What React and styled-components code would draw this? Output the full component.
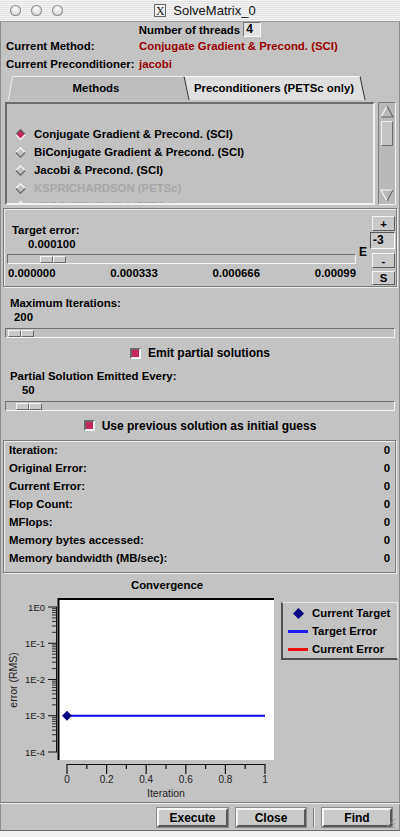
import React from 'react';
import styled, { createGlobalStyle } from 'styled-components';

const GlobalStyle = createGlobalStyle`
  html, body {
    margin: 0;
    padding: 0;
    background: #f0f0f0;
  }
  body {
    font-family: "Liberation Sans", Arial, sans-serif;
    font-size: 11.4px;
    color: #000;
  }
`;

const BG = '#c3c3c3';
const RED_TEXT = '#9a0000';
const CHECK_RED = '#c4265a';
const FS = '11.4px';

const Window = styled.div`
  position: relative;
  width: 400px;
  box-sizing: border-box;
  background: ${BG};
  border-bottom: 1px solid #6e6e6e;
  box-shadow: inset 1px 0 0 #8c8c8c, inset -1px 0 0 #8c8c8c, 0 2px 4px rgba(0, 0, 0, 0.35);
  display: flex;
  flex-direction: column;
  font-weight: bold;
`;

/* ---------- title bar ---------- */

const TitleBar = styled.div`
  height: 22px;
  box-sizing: border-box;
  display: grid;
  grid-template-columns: 1fr auto 1fr;
  align-items: center;
  padding-left: 10px;
  background: repeating-linear-gradient(#f4f4f4 0 1px, #e3e3e3 1px 2px);
  border-bottom: 1px solid #9a9a9a;
`;

const Lights = styled.div`
  display: flex;
  gap: 10px;
`;

const Light = styled.span`
  width: 11px;
  height: 11px;
  border-radius: 50%;
  background: radial-gradient(circle at 50% 35%, #fbfbfb, #c6c6c6);
  box-shadow: inset 0 0 0 1px #8e8e8e;
`;

const Title = styled.div`
  display: flex;
  align-items: center;
  gap: 7px;
  font-weight: normal;
  font-size: 13px;
  color: #111;
`;

const XLogo = styled.span`
  width: 10px;
  height: 11px;
  border: 1px solid #6a6a6a;
  background: #f6f6f6;
  display: flex;
  align-items: center;
  justify-content: center;
  font-family: "Liberation Serif", serif;
  font-size: 12px;
  line-height: 1;
`;

/* ---------- header rows ---------- */

const ThreadsRow = styled.div`
  height: 15px;
  display: flex;
  align-items: center;
  justify-content: center;
  gap: 3px;
  font-size: ${FS};
`;

const SmallField = styled.div`
  width: 18px;
  height: 15px;
  box-sizing: border-box;
  border: 1px solid;
  border-color: #777 #fafafa #fafafa #777;
  background: #e2e2e2;
  padding-left: 2px;
  font-size: 12px;
  line-height: 13px;
`;

const InfoGrid = styled.div`
  display: grid;
  grid-template-columns: 133px 1fr;
  grid-auto-rows: 18px;
  align-items: center;
  padding-left: 6px;
  white-space: nowrap;
`;

const Value = styled.span`
  color: ${RED_TEXT};
`;

/* ---------- tabs + list ---------- */

const Tabs = styled.div`
  margin-top: 3px;
  height: 24px;
  display: flex;
  padding-left: 10px;
`;

const Tab = styled.div`
  position: relative;
  z-index: ${p => (p.$active ? 1 : 2)};
  width: ${p => p.$w}px;
  margin-left: ${p => p.$shift || 0}px;
  height: 24px;
  display: flex;
  align-items: center;
  justify-content: center;
  font-size: ${FS};

  &::before {
    content: '';
    position: absolute;
    inset: 0;
    z-index: -1;
    background: ${p => (p.$active ? '#bdbdbd' : '#dfdfdf')};
    border-top: 1px solid ${p => (p.$active ? '#ececec' : '#f8f8f8')};
    border-left: 1px solid ${p => (p.$active ? '#efefef' : '#2e2e2e')};
    border-right: 1px solid ${p => (p.$active ? 'transparent' : '#2e2e2e')};
    transform: skewX(${p => p.$skew}deg);
  }
`;

const TabText = styled.span`
  margin-left: ${p => p.$nudge || 0}px;
`;

const ListArea = styled.div`
  margin: 2px 0 0 5px;
  height: 103px;
  display: flex;
  gap: 3px;
`;

const ListBox = styled.div`
  width: 370px;
  box-sizing: border-box;
  border: 2px solid;
  border-color: #6c6c6c #f2f2f2 #f2f2f2 #6c6c6c;
  background: #c1c1c1;
  padding-top: 21px;
  overflow: hidden;
`;

const ListItem = styled.div`
  height: 18px;
  display: flex;
  align-items: center;
  gap: 8px;
  padding-left: 8px;
  font-size: ${FS};
  color: ${p => (p.$dim ? '#a7a7a7' : '#000')};
`;

const ScrollBar = styled.div`
  width: 18px;
  box-sizing: border-box;
  border: 1px solid;
  border-color: #7c7c7c #f4f4f4 #f4f4f4 #7c7c7c;
  background: #b9b9b9;
  display: flex;
  flex-direction: column;
  align-items: center;
  padding: 1px 0;
`;

const ScrollThumb = styled.div`
  width: 12px;
  height: 25px;
  margin-top: 2px;
  box-sizing: border-box;
  border: 1px solid;
  border-color: #f4f4f4 #6c6c6c #6c6c6c #f4f4f4;
  background: #c4c4c4;
`;

const Spacer = styled.div`
  flex: 1;
`;

/* ---------- panels ---------- */

const Panel = styled.div`
  margin: ${p => p.$margin};
  height: ${p => p.$h}px;
  box-sizing: border-box;
  border: 1px solid #7c7c7c;
  box-shadow: inset 1px 1px 0 #ececec, 1px 1px 0 #ececec;
`;

const TargetPanel = styled(Panel)`
  display: grid;
  grid-template-columns: 1fr 14px 25px;
  padding-right: 1px;
`;

const TargetMain = styled.div`
  padding: 14px 0 0 3px;
  display: flex;
  flex-direction: column;
`;

const Line = styled.div`
  height: 14px;
  line-height: 14px;
  padding-left: ${p => p.$indent || 0}px;
  font-size: ${FS};
  white-space: nowrap;
`;

const ScaleLabels = styled.div`
  margin-top: 2px;
  height: 14px;
  line-height: 14px;
  display: flex;
  justify-content: space-between;
  padding-left: 1px;
`;

const ELabel = styled.div`
  padding-top: 36px;
  text-align: center;
  font-size: 12px;
  line-height: 14px;
`;

const SideButtons = styled.div`
  display: flex;
  flex-direction: column;
  align-items: flex-end;
  padding-top: 7px;
`;

const SideButton = styled.div`
  width: 23px;
  height: ${p => p.$h || 15}px;
  margin-top: ${p => p.$top || 0}px;
  box-sizing: border-box;
  border: 1px solid;
  border-color: #f4f4f4 #5e5e5e #5e5e5e #f4f4f4;
  background: #c9c9c9;
  display: flex;
  align-items: center;
  justify-content: center;
  font-size: ${FS};
`;

const ExpField = styled.div`
  width: 25px;
  height: 17px;
  margin-top: 1px;
  box-sizing: border-box;
  border: 1px solid;
  border-color: #555 #fafafa #fafafa #555;
  background: #c9c9c9;
  padding-left: 2px;
  font-size: 12px;
  line-height: 15px;
`;

/* ---------- sliders ---------- */

const Track = styled.div`
  height: 10px;
  margin: ${p => p.$margin};
  box-sizing: border-box;
  border: 1px solid;
  border-color: #6f6f6f #f4f4f4 #f4f4f4 #6f6f6f;
  background: #c1c1c1;
  display: flex;
  align-items: center;
`;

const Thumb = styled.div`
  margin-left: ${p => p.$at}px;
  display: flex;
`;

const ThumbHalf = styled.span`
  width: 13px;
  height: 7px;
  box-sizing: border-box;
  border: 1px solid;
  border-color: #f6f6f6 #6a6a6a #6a6a6a #f6f6f6;
  background: #c8c8c8;
`;

const Slider = ({ at, margin }) => (
  <Track $margin={margin}>
    <Thumb $at={at}>
      <ThumbHalf />
      <ThumbHalf />
    </Thumb>
  </Track>
);

const Section = styled.div`
  padding: ${p => p.$pad || 0};
  display: flex;
  flex-direction: column;
`;

const CheckRow = styled.div`
  height: ${p => p.$h}px;
  display: flex;
  align-items: center;
  justify-content: center;
  gap: 7px;
  font-size: 12px;
`;

const CheckBox = styled.span`
  width: 11px;
  height: 11px;
  box-sizing: border-box;
  border: 2px solid;
  border-color: #6a6a6a #f4f4f4 #f4f4f4 #6a6a6a;
  background: ${CHECK_RED};
`;

/* ---------- stats ---------- */

const StatRow = styled.div`
  height: 18px;
  display: flex;
  align-items: center;
  justify-content: space-between;
  padding: 0 5px;
  font-size: ${FS};
`;

/* ---------- chart ---------- */

const ChartSection = styled.div`
  display: flex;
`;

const ChartColumn = styled.div`
  display: flex;
  flex-direction: column;
`;

const ChartTitle = styled.div`
  margin-top: 5px;
  height: 14px;
  line-height: 14px;
  padding-left: 58px;
  text-align: center;
  font-size: ${FS};
`;

const Plot = styled.svg`
  display: block;
  font-family: "Liberation Sans", Arial, sans-serif;
  font-weight: normal;
`;

const Legend = styled.div`
  margin: 29px 0 0 5px;
  width: 117px;
  height: 58px;
  box-sizing: border-box;
  border-style: solid;
  border-width: 1px 1px 2px 2px;
  border-color: #e6e6e6 #e6e6e6 #505050 #505050;
  padding: 1px 0 0 5px;
`;

const LegendItem = styled.div`
  height: 18px;
  display: flex;
  align-items: center;
  gap: 4px;
  font-size: ${FS};
  white-space: nowrap;
`;

const LegendIcon = styled.span`
  width: 20px;
  height: 11px;
  display: flex;
  align-items: center;
  justify-content: center;
`;

const LegendLine = styled.span`
  width: 20px;
  height: 3px;
  background: ${p => p.$color};
`;

/* ---------- bottom ---------- */

const Separator = styled.div`
  margin-top: 2px;
  height: 0;
  border-top: 1px solid #7c7c7c;
  border-bottom: 1px solid #ececec;
`;

const ButtonBar = styled.div`
  display: flex;
  justify-content: flex-end;
  align-items: center;
  gap: 8px;
  padding: 4px 8px 3px 0;
`;

const Button = styled.div`
  width: ${p => p.$w}px;
  height: 19px;
  box-sizing: border-box;
  border: 2px solid;
  border-color: #f6f6f6 #575757 #575757 #f6f6f6;
  outline: 1px solid #8a8a8a;
  background: #cacaca;
  display: flex;
  align-items: center;
  justify-content: center;
  font-size: 12px;
`;

const VSep = styled.div`
  width: 0;
  height: 19px;
  border-left: 1px solid #7c7c7c;
  border-right: 1px solid #ececec;
  margin: 0 -1px;
`;

const Grip = styled.svg`
  position: absolute;
  right: 4px;
  bottom: 1px;
`;

/* ---------- drawings ---------- */

const Diamond = ({ on }) => (
  <svg width="11" height="11" viewBox="0 0 11 11">
    <polygon points="5.5,0.8 10.2,5.5 5.5,10.2 0.8,5.5" fill={on ? CHECK_RED : '#c1c1c1'} />
    <polyline points="0.8,5.5 5.5,0.8 10.2,5.5" fill="none" stroke={on ? '#5e5e5e' : '#f6f6f6'} strokeWidth="1.3" />
    <polyline points="0.8,5.5 5.5,10.2 10.2,5.5" fill="none" stroke={on ? '#f6f6f6' : '#6a6a6a'} strokeWidth="1.3" />
  </svg>
);

const ArrowUp = () => (
  <svg width="14" height="15" viewBox="0 0 14 15">
    <polyline points="1,13 7,2" fill="none" stroke="#f6f6f6" strokeWidth="1.2" />
    <polyline points="7,2 13,13 1,13" fill="none" stroke="#6a6a6a" strokeWidth="1.2" />
  </svg>
);

const ArrowDown = () => (
  <svg width="14" height="14" viewBox="0 0 14 14">
    <polyline points="13,1 1,1 7,12" fill="none" stroke="#f6f6f6" strokeWidth="1.2" />
    <polyline points="7,12 13,1" fill="none" stroke="#6a6a6a" strokeWidth="1.2" />
  </svg>
);

const Y_TOP = 15;
const DEC = 36.25;
const X0 = 67;
const XS = 198;
const Y_LABELS = ['1E0', '1E-1', '1E-2', '1E-3', '1E-4'];
const X_LABELS = ['0', '0.2', '0.4', '0.6', '0.8', '1'];

const ConvergencePlot = () => {
  const minor = [];
  for (let d = 0; d < 4; d++) {
    const yb = Y_TOP + DEC * (d + 1);
    for (let v = 2; v < 10; v++) minor.push(yb - Math.log10(v) * DEC);
  }
  const targetY = Y_TOP + DEC * 3;

  return (
    <Plot width="276" height="208" viewBox="0 0 276 208">
      <rect x="58" y="7" width="216" height="161" fill="#fff" />
      <line x1="58.5" y1="6" x2="58.5" y2="168" stroke="#000" strokeWidth="2" />
      <line x1="58" y1="7" x2="274" y2="7" stroke="#000" strokeWidth="2" />

      <line x1="56.5" y1={Y_TOP} x2="56.5" y2={Y_TOP + DEC * 4} stroke="#111" strokeWidth="1" />
      {Y_LABELS.map((t, i) => (
        <g key={t}>
          <line x1="48" y1={Y_TOP + DEC * i} x2="57" y2={Y_TOP + DEC * i} stroke="#111" strokeWidth="1" />
          <text x="45" y={Y_TOP + DEC * i + 3.5} fontSize="9.5" textAnchor="end" fill="#222">{t}</text>
        </g>
      ))}
      {minor.map((y, i) => (
        <line key={i} x1="52" y1={y} x2="57" y2={y} stroke="#222" strokeWidth="0.9" />
      ))}
      <text x="13" y="88" fontSize="10.5" textAnchor="middle" dominantBaseline="central"
        transform="rotate(-90 13 88)" fill="#222">error (RMS)</text>

      <line x1={X0} y1="172.5" x2={X0 + XS} y2="172.5" stroke="#111" strokeWidth="1" />
      {Array.from({ length: 11 }, (_, i) => (
        <line key={i} x1={X0 + (XS * i) / 10} y1="172" x2={X0 + (XS * i) / 10}
          y2={i % 2 === 0 ? 182 : 177} stroke="#111" strokeWidth="1.2" />
      ))}
      {X_LABELS.map((t, i) => (
        <text key={t} x={X0 + (XS * i) / 5} y="191" fontSize="10" textAnchor="middle" fill="#222">{t}</text>
      ))}
      <text x="166" y="205" fontSize="10.5" textAnchor="middle" fill="#222">Iteration</text>

      <line x1={X0} y1={targetY} x2={X0 + XS} y2={targetY} stroke="#0a0ae6" strokeWidth="2" />
      <polygon points={`${X0},${targetY - 5} ${X0 + 5},${targetY} ${X0},${targetY + 5} ${X0 - 5},${targetY}`} fill="#00007e" />
    </Plot>
  );
};

const methods = [
  { label: 'Conjugate Gradient & Precond. (SCI)', on: true },
  { label: 'BiConjugate Gradient & Precond. (SCI)' },
  { label: 'Jacobi & Precond. (SCI)' },
  { label: 'KSPRICHARDSON (PETSc)', dim: true },
  { label: 'KSPCHEBYCHEV (PETSc)', dim: true },
];

const stats = [
  'Iteration:',
  'Original Error:',
  'Current Error:',
  'Flop Count:',
  'MFlops:',
  'Memory bytes accessed:',
  'Memory bandwidth (MB/sec):',
];

const App = () => {
  return (
    <>
      <GlobalStyle />
      <Window>
        <TitleBar>
          <Lights>
            <Light />
            <Light />
            <Light />
          </Lights>
          <Title>
            <XLogo>X</XLogo>
            SolveMatrix_0
          </Title>
          <span />
        </TitleBar>

        <ThreadsRow>
          Number of threads
          <SmallField>4</SmallField>
        </ThreadsRow>

        <InfoGrid>
          <span>Current Method:</span>
          <Value>Conjugate Gradient &amp; Precond. (SCI)</Value>
          <span>Current Preconditioner:</span>
          <Value>jacobi</Value>
        </InfoGrid>

        <Tabs>
          <Tab $active $w={180} $skew={-10}>
            <TabText $nudge={-8}>Methods</TabText>
          </Tab>
          <Tab $w={177} $shift={-4.5} $skew={12}>
            Preconditioners (PETSc only)
          </Tab>
        </Tabs>

        <ListArea>
          <ListBox>
            {methods.map(m => (
              <ListItem key={m.label} $dim={m.dim}>
                <Diamond on={m.on} />
                {m.label}
              </ListItem>
            ))}
          </ListBox>
          <ScrollBar>
            <ArrowUp />
            <ScrollThumb />
            <Spacer />
            <ArrowDown />
          </ScrollBar>
        </ListArea>

        <TargetPanel $margin="3px 3px 0 3px" $h={79}>
          <TargetMain>
            <Line $indent={5}>Target error:</Line>
            <Line $indent={21}>0.000100</Line>
            <Slider at={32} margin="3px 0 0 0" />
            <ScaleLabels>
              <span>0.000000</span>
              <span>0.000333</span>
              <span>0.000666</span>
              <span>0.00099</span>
            </ScaleLabels>
          </TargetMain>
          <ELabel>E</ELabel>
          <SideButtons>
            <SideButton>+</SideButton>
            <ExpField>-3</ExpField>
            <SideButton $top={4}>-</SideButton>
            <SideButton $top={3} $h={14}>S</SideButton>
          </SideButtons>
        </TargetPanel>

        <Section $pad="9px 5px 0 5px">
          <Line $indent={5}>Maximum Iterations:</Line>
          <Line $indent={9}>200</Line>
          <Slider at={2} margin="4px 0 0 0" />
        </Section>

        <CheckRow $h={30}>
          <CheckBox />
          Emit partial solutions
        </CheckRow>

        <Section $pad="1px 5px 0 5px">
          <Line $indent={5}>Partial Solution Emitted Every:</Line>
          <Line $indent={17}>50</Line>
          <Slider at={10} margin="4px 0 0 0" />
        </Section>

        <CheckRow $h={29}>
          <CheckBox />
          Use previous solution as initial guess
        </CheckRow>

        <Panel $margin="0 4px 0 3px" $h={133}>
          {stats.map(s => (
            <StatRow key={s}>
              <span>{s}</span>
              <span>0</span>
            </StatRow>
          ))}
        </Panel>

        <ChartSection>
          <ChartColumn>
            <ChartTitle>Convergence</ChartTitle>
            <ConvergencePlot />
          </ChartColumn>
          <Legend>
            <LegendItem>
              <LegendIcon>
                <svg width="11" height="11" viewBox="0 0 11 11">
                  <polygon points="5.5,0 11,5.5 5.5,11 0,5.5" fill="#00007e" />
                </svg>
              </LegendIcon>
              Current Target
            </LegendItem>
            <LegendItem>
              <LegendLine $color="#1e1ef0" />
              Target Error
            </LegendItem>
            <LegendItem>
              <LegendLine $color="#f01010" />
              Current Error
            </LegendItem>
          </Legend>
        </ChartSection>

        <Separator />
        <ButtonBar>
          <Button $w={71}>Execute</Button>
          <Button $w={70}>Close</Button>
          <VSep />
          <Button $w={70}>Find</Button>
        </ButtonBar>

        <Grip width="12" height="12" viewBox="0 0 12 12">
          <line x1="11" y1="2" x2="2" y2="11" stroke="#8a8a8a" />
          <line x1="11" y1="6" x2="6" y2="11" stroke="#8a8a8a" />
          <line x1="11" y1="10" x2="10" y2="11" stroke="#8a8a8a" />
        </Grip>
      </Window>
    </>
  );
};

export default App;
